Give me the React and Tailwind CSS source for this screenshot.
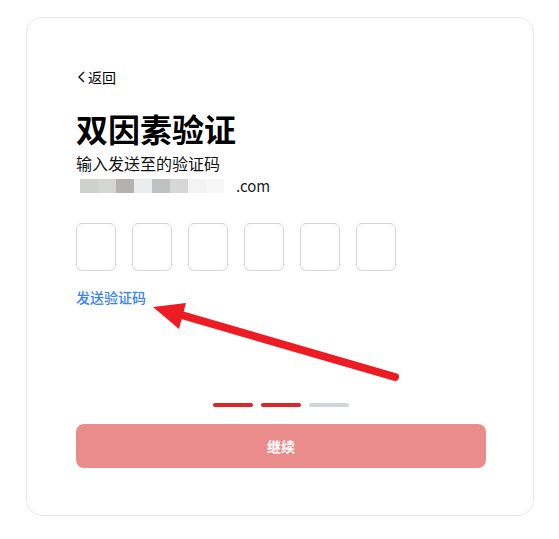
import React from 'react';

const MOSAIC = ['#cfd1cf', '#d4d6d3', '#b3b2b0', '#ececee', '#bfc0c2', '#d6d7d6', '#f3f3f3', '#f7f7f7'];

const App = () => {
  return (
    <div className="relative w-[559px] h-[539px] bg-white overflow-hidden" style={{ fontFamily: '"Noto Sans CJK SC", "Noto Sans", sans-serif' }}>
      <div className="ml-[26px] mt-[17px] w-[508px] h-[499px] border border-[#e5e7eb] rounded-[16px] pl-[49px] pr-[47px] pt-[49px] flex flex-col">
        {/* back */}
        <div className="flex items-center h-[20px] text-[14px] text-black leading-[20px]">
          <svg width="12" height="16" viewBox="0 0 12 16" className="-ml-[1px] mr-[1px]">
            <path d="M9 3 L4 8 L9 13" fill="none" stroke="#111" strokeWidth="1.4" />
          </svg>
          <span>返回</span>
        </div>

        <h1 className="mt-[21px] text-[32px] leading-[40px] font-bold text-black">双因素验证</h1>
        <p className="mt-[4px] text-[16px] leading-[22px] text-[#111]">输入发送至的验证码</p>

        {/* blurred email */}
        <div className="mt-[1px] flex items-center h-[22px] pl-[4px]">
          <div className="flex h-[14px]">
            {MOSAIC.map((c, i) => (
              <div key={i} className="w-[18px] h-full" style={{ backgroundColor: c }} />
            ))}
          </div>
          <span className="ml-[12px] text-[15px] text-[#222]">.com</span>
        </div>

        {/* code boxes */}
        <div className="mt-[26px] flex gap-[16px]">
          {[0, 1, 2, 3, 4, 5].map(i => (
            <div key={i} className="w-[40px] h-[48px] border border-[#d1d5db] rounded-[6px]" />
          ))}
        </div>

        <div className="mt-[16px] text-[14px] leading-[20px] font-medium text-[#3b82f6]">发送验证码</div>

        {/* steps */}
        <div className="mt-[96px] flex justify-center gap-[8px]">
          <div className="w-[40px] h-[4px] rounded-full bg-[#dc2626]" />
          <div className="w-[40px] h-[4px] rounded-full bg-[#dc2626]" />
          <div className="w-[40px] h-[4px] rounded-full bg-[#d1d5db]" />
        </div>

        <button className="mt-[17px] w-full h-[44px] rounded-[8px] bg-[#ea8c8c] text-white text-[14px] font-bold">
          继续
        </button>
      </div>

      {/* annotation arrow */}
      <svg className="absolute inset-0 pointer-events-none" width="559" height="539" viewBox="0 0 559 539">
        <line x1="395" y1="377" x2="178" y2="314" stroke="#ed1c24" strokeWidth="8" strokeLinecap="round" />
        <polygon points="153,307 186,303 179,329" fill="#ed1c24" />
      </svg>
    </div>
  );
};

export default App;
